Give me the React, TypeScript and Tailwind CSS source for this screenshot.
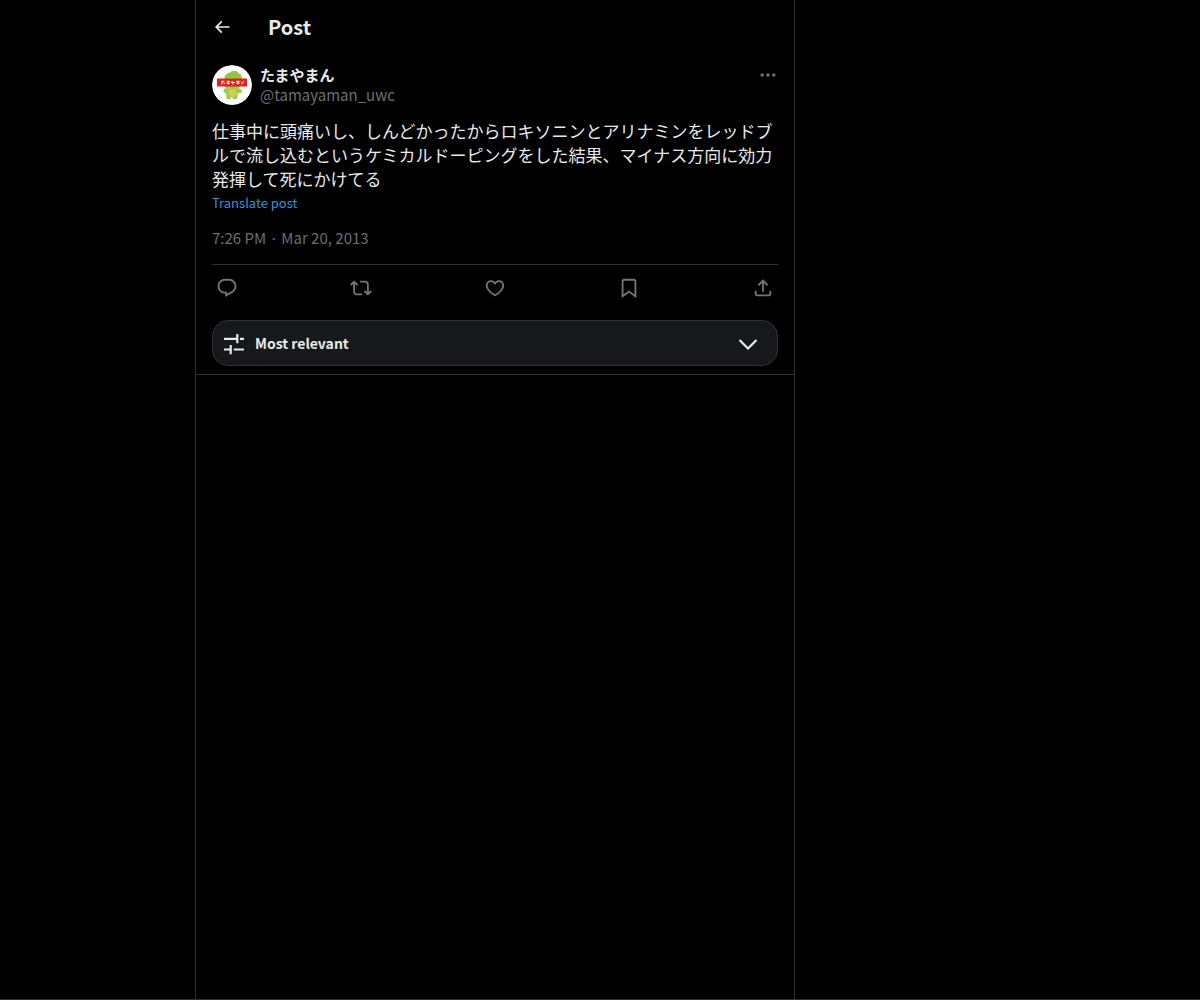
import type { ReactNode } from 'react';

interface IconProps {
  path: string;
  className: string;
}

interface IconButtonProps {
  label: string;
  className: string;
  children: ReactNode;
}

const icons = {
  back: 'M7.414 13l5.043 5.04-1.414 1.42L3.586 12l7.457-7.46 1.414 1.42L7.414 11H21v2H7.414z',
  more: 'M3 12c0-1.1.9-2 2-2s2 .9 2 2-.9 2-2 2-2-.9-2-2zm9 2c1.1 0 2-.9 2-2s-.9-2-2-2-2 .9-2 2 .9 2 2 2zm7 0c1.1 0 2-.9 2-2s-.9-2-2-2-2 .9-2 2 .9 2 2 2z',
  reply:
    'M1.751 10c0-4.42 3.584-8 8.005-8h4.366c4.49 0 8.129 3.64 8.129 8.13 0 2.96-1.607 5.68-4.196 7.11l-8.054 4.46v-3.69h-.067c-4.49.1-8.183-3.51-8.183-8.01zm8.005-6c-3.317 0-6.005 2.69-6.005 6 0 3.37 2.77 6.08 6.138 6.01l.351-.01h1.761v2.3l5.087-2.81c1.951-1.08 3.163-3.13 3.163-5.36 0-3.39-2.744-6.13-6.129-6.13H9.756z',
  repost:
    'M4.5 3.88l4.432 4.14-1.364 1.46L5.5 7.55V16c0 1.1.896 2 2 2H13v2H7.5c-2.209 0-4-1.79-4-4V7.55L1.432 9.48.068 8.02 4.5 3.88zM16.5 6H11V4h5.5c2.209 0 4 1.79 4 4v8.45l2.068-1.93 1.364 1.46-4.432 4.14-4.432-4.14 1.364-1.46 2.068 1.93V8c0-1.1-.896-2-2-2z',
  like: 'M16.697 5.5c-1.222-.06-2.679.51-3.89 2.16l-.805 1.09-.806-1.09C9.984 6.01 8.526 5.44 7.304 5.5c-1.243.07-2.349.78-2.91 1.91-.552 1.12-.633 2.78.479 4.82 1.074 1.97 3.257 4.27 7.129 6.61 3.87-2.34 6.052-4.64 7.126-6.61 1.111-2.04 1.03-3.7.477-4.82-.561-1.13-1.666-1.84-2.908-1.91zm4.187 7.69c-1.351 2.48-4.001 5.12-8.379 7.67l-.503.3-.504-.3c-4.379-2.55-7.029-5.19-8.382-7.67-1.36-2.5-1.41-4.86-.514-6.67.887-1.79 2.647-2.91 4.601-3.01 1.651-.09 3.368.56 4.798 2.01 1.429-1.45 3.146-2.1 4.796-2.01 1.954.1 3.714 1.22 4.601 3.01.896 1.81.846 4.17-.514 6.67z',
  bookmark:
    'M4 4.5C4 3.12 5.119 2 6.5 2h11C18.881 2 20 3.12 20 4.5v18.44l-8-5.71-8 5.71V4.5zM6.5 4c-.276 0-.5.22-.5.5v14.56l6-4.29 6 4.29V4.5c0-.28-.224-.5-.5-.5h-11z',
  share:
    'M12 2.59l5.7 5.7-1.41 1.42L13 6.41V16h-2V6.41l-3.3 3.3-1.41-1.42L12 2.59zM21 15l-.02 3.51c0 1.38-1.12 2.49-2.5 2.49H5.5C4.11 21 3 19.88 3 18.5V15h2v3.5c0 .28.22.5.5.5h12.98c.28 0 .5-.22.5-.5L19 15h2z',
};

const actions = [
  { label: 'Reply', path: icons.reply },
  { label: 'Repost', path: icons.repost },
  { label: 'Like', path: icons.like },
  { label: 'Bookmark', path: icons.bookmark },
  { label: 'Share', path: icons.share },
];

function Icon({ path, className }: IconProps) {
  return (
    <svg viewBox="0 0 24 24" fill="currentColor" aria-hidden="true" className={className}>
      <path d={path} />
    </svg>
  );
}

function IconButton({ label, className, children }: IconButtonProps) {
  return (
    <button type="button" aria-label={label} className={`flex items-center justify-center cursor-pointer ${className}`}>
      {children}
    </button>
  );
}

function Avatar() {
  return (
    <svg viewBox="0 0 40 40" aria-hidden="true" className="w-10 h-10 rounded-full shrink-0">
      <circle cx="20" cy="20" r="20" fill="#ffffff" />
      {/* head */}
      <path
        d="M12.500 14c0-4 2.500-6 5.500-6.500 1-1.300 3-1.800 5-1.500 2 0 3.500 1 3.500 2.300 3 1 4 3.700 3.500 6.700.5 3-1 7-4 8.500H15c-3-1.500-3.500-6-2.500-9.500z"
        fill="#93c83e"
      />
      {/* arms and body */}
      <path
        d="M15 23h11c2 .5 4 1 4.200 3 0 2-2.200 2.500-4.200 2l-1 6h-4l-.8-2h-1l-.7 2h-4l-.5-6c-2 0-3-1.500-2.500-3 .4-1.300 1.500-2 3.500-2z"
        fill="#9fce4b"
      />
      <path d="M17.500 24h6l1 5-2 2.500h-4l-2-2.500z" fill="#d3cf55" />
      <circle cx="17" cy="23" r="1.500" fill="#e3b14e" />
      <circle cx="24" cy="23" r="1.500" fill="#e3b14e" />
      {/* banner across the eyes */}
      <rect x="5" y="13.500" width="30" height="8" fill="#dc2320" />
      <g stroke="#ffffff" strokeWidth="1" fill="none" opacity="0.85">
        <path d="M9 16.500h3.500M11 15.500l-1.500 4M11.500 18.500h1.500M14.500 16.500h3.500M16.200 15.500v4M14.500 18.200h3.500M19 17.500h4M20 16l1 3.500M24.200 16.500h3.500M26 15.500v4M24.200 18.200h3.500M29 16.500l1 1M32 16l-2.500 3.500" />
      </g>
    </svg>
  );
}

function FilterIcon() {
  return (
    <svg
      viewBox="0 0 24 24"
      fill="none"
      stroke="currentColor"
      strokeWidth="2.2"
      aria-hidden="true"
      className="w-6 h-6 shrink-0"
    >
      <path d="M2 7.800h13M15.300 3v9.200M18 7.800h4M2 18.500h6.700M8.700 14v9.200M11.700 18.500H22" />
    </svg>
  );
}

function SortSelect() {
  return (
    <div className="relative mt-4 text-[#e7e9ea]">
      <select
        aria-label="Sort replies"
        className="block w-full h-[46px] pl-[42px] pr-12 appearance-none rounded-2xl border border-[#2f3336] bg-[#16181c] text-sm font-bold cursor-pointer"
      >
        <option>Most relevant</option>
      </select>
      <div className="absolute inset-0 px-[10px] flex items-center justify-between pointer-events-none">
        <FilterIcon />
        <svg
          viewBox="0 0 40 24"
          fill="none"
          stroke="currentColor"
          strokeWidth="2.2"
          aria-hidden="true"
          className="w-10 h-6"
        >
          <path d="M11.500 9L20 17.500 28.500 9" />
        </svg>
      </div>
    </div>
  );
}

export default function App() {
  return (
    <div className="grid grid-cols-[195fr_minmax(0,600px)_405fr] min-h-screen bg-black border-b border-[#2f3336] text-[#e7e9ea] font-['Noto_Sans_CJK_JP',sans-serif]">
      <main className="col-start-2 border-x border-[#2f3336]">
        <header className="flex items-center h-[53px] px-4">
          <IconButton label="Back" className="w-5 h-5">
            <Icon path={icons.back} className="w-5 h-5" />
          </IconButton>
          <h1 className="ml-9 text-xl font-bold">Post</h1>
        </header>

        <article className="px-4 pt-3 pb-2 border-b border-[#2f3336]">
          <div className="flex items-start gap-2">
            <Avatar />
            <div className="flex-1 text-[15px] leading-5">
              <p className="font-bold">たまやまん</p>
              <p className="text-[#6c6f72]">@tamayaman_uwc</p>
            </div>
            <IconButton label="More" className="w-5 h-5 text-[#71767b]">
              <Icon path={icons.more} className="w-5 h-5" />
            </IconButton>
          </div>

          <p lang="ja" className="mt-3.5 text-[17px] leading-6">
            仕事中に頭痛いし、しんどかったからロキソニンとアリナミンをレッドブルで流し込むというケミカルドーピングをした結果、マイナス方向に効力発揮して死にかけてる
          </p>
          <button type="button" className="block text-[13px] leading-6 text-[#4090d0] cursor-pointer">
            Translate post
          </button>

          <div className="pt-[13px] pb-4 border-b border-[#2f3336] text-[15px] leading-5 text-[#6c6f72]">
            <a href="#post">7:26 PM · Mar 20, 2013</a>
          </div>

          <div className="flex items-center justify-between h-[39px] pt-[7px] text-[#71767b]">
            {actions.map((action) => (
              <IconButton key={action.label} label={action.label} className="w-[30px] h-8">
                <Icon path={action.path} className="w-[22px] h-[22px]" />
              </IconButton>
            ))}
          </div>

          <SortSelect />
        </article>
      </main>
    </div>
  );
}
